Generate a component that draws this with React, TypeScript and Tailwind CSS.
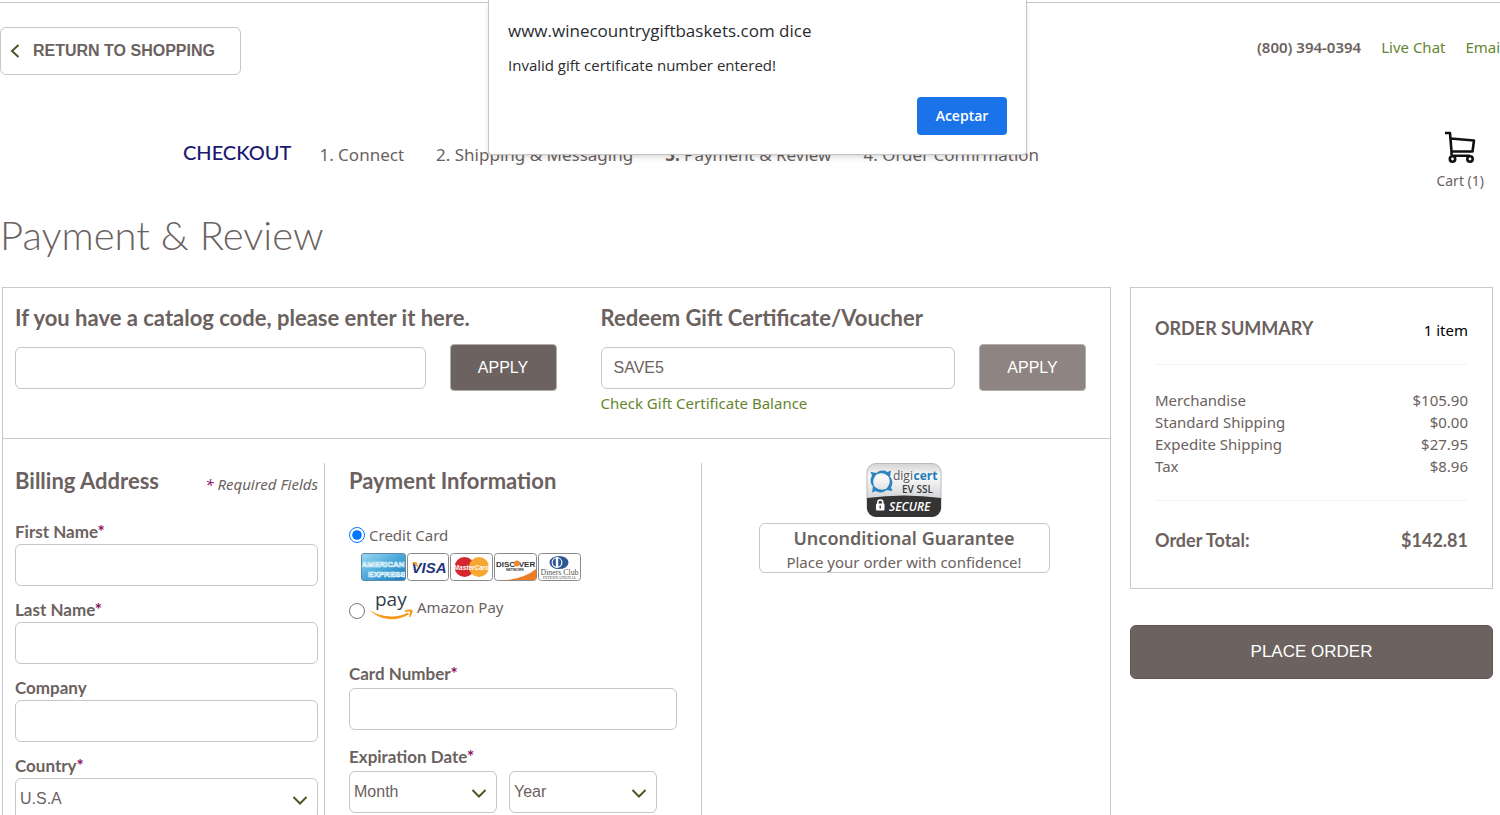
import React from "react";

const display = "font-[Lato,sans-serif]";
const field =
  "block h-[42px] w-full rounded-md border border-[#cbc5c5] bg-white font-['Liberation_Sans',sans-serif] text-base text-[#6b6260] outline-none";

function Star() {
  return <span className="text-[#8a0f64]">*</span>;
}

function FieldLabel({ id, label, required, roomy }: { id: string; label: string; required?: boolean; roomy?: boolean }) {
  return (
    <label
      htmlFor={id}
      className={`${display} block text-[17px] font-bold ${roomy ? "leading-7" : "leading-6"}`}
    >
      {label}
      {required && <Star />}
    </label>
  );
}

function TextField(props: { id: string; label: string; required?: boolean; roomy?: boolean }) {
  return (
    <div>
      <FieldLabel {...props} />
      <input id={props.id} type="text" className={`${field} px-3`} />
    </div>
  );
}

function Dropdown({ id, value, label }: { id: string; value: string; label?: string }) {
  return (
    <div className="relative">
      <select id={id} aria-label={label} className={`${field} appearance-none pr-10 pl-1`}>
        <option>{value}</option>
      </select>
      <svg
        className="pointer-events-none absolute top-4 right-2.5 h-3 w-4"
        viewBox="0 0 16 12"
        fill="none"
        stroke="#4f5527"
        strokeWidth="2"
      >
        <path d="M1.500 3 8 9.500 14.500 3" />
      </svg>
    </div>
  );
}

function CartIcon() {
  return (
    <svg className="h-8 w-8" viewBox="0 0 32 32" fill="none" stroke="#111" strokeWidth="2.600">
      <path d="M1 2h5l1.500 18.500M6.500 7.500 30 9.500 28.500 20.500H7.500M7.500 20.500v3.500M8 24.800h18" strokeLinejoin="round" />
      <circle cx="8.500" cy="28" r="2.700" />
      <circle cx="26" cy="28" r="2.700" />
    </svg>
  );
}

function CardLogos() {
  return (
    <svg className="h-7 w-[220px]" viewBox="0 0 220 28" role="img" aria-label="Accepted cards">
      <defs>
        <linearGradient id="amex" x1="0" y1="0" x2="1" y2="1">
          <stop offset="0" stopColor="#9fd8f2" />
          <stop offset="0.500" stopColor="#4aa9da" />
          <stop offset="1" stopColor="#1b7abb" />
        </linearGradient>
        <clipPath id="amexClip">
          <rect x="1" y="1" width="43" height="26" rx="2" />
        </clipPath>
      </defs>
      <g stroke="#8a8a8a" strokeWidth="1">
        <rect x="0.500" y="0.500" width="44" height="27" rx="2.500" fill="url(#amex)" stroke="#5b8ba6" />
        <rect x="46.500" y="0.500" width="41" height="27" rx="3" fill="#fff" />
        <rect x="89.500" y="0.500" width="42" height="27" rx="3" fill="#fff" />
        <rect x="133.500" y="0.500" width="42" height="27" rx="3" fill="#fff" />
        <rect x="177.500" y="0.500" width="42" height="27" rx="3" fill="#fff" />
      </g>
      <g fontFamily="Liberation Sans, sans-serif" textAnchor="middle">
        <g clipPath="url(#amexClip)" fontWeight="bold" fill="#3d9bd0" stroke="#eaf8fe" strokeWidth="0.700" fontSize="8">
          <text x="22" y="14">AMERICAN</text>
          <text x="26" y="23.500">EXPRESS</text>
        </g>
        <text x="68" y="20" fontSize="15" fontWeight="bold" fontStyle="italic" fill="#1f3580">VISA</text>
        <path d="M51 9h4.500l2 6z" fill="#e9a32a" />
        <circle cx="103.500" cy="14" r="10" fill="#d2282e" />
        <circle cx="118" cy="14" r="10" fill="#f7a833" />
        <text x="110.500" y="16.500" fontSize="6.500" fontWeight="bold" fontStyle="italic" fill="#fff">MasterCard</text>
        <path d="M175 16v9a2 2 0 0 1-2 2h-27q18-2 29-11z" fill="#ee7c22" />
        <g fill="#333" fontWeight="bold">
          <text x="144.500" y="13.500" fontSize="8">DISC</text>
          <text x="166" y="13.500" fontSize="8">VER</text>
          <text x="154" y="18" fontSize="3.500">NETWORK</text>
        </g>
        <circle cx="156" cy="10.500" r="3" fill="#ee8a2f" />
        <ellipse cx="198" cy="9.500" rx="9.500" ry="6.600" fill="#2c5795" />
        <circle cx="196" cy="9.500" r="5.400" fill="#fff" />
        <path d="M194.800 5.300a4.400 4.400 0 0 0 0 8.400zM197.200 5.300a4.400 4.400 0 0 1 0 8.400z" fill="#2c5795" />
        <g fill="#555" fontFamily="Liberation Serif, serif">
          <text x="198.500" y="22" fontSize="7.800">Diners Club</text>
          <text x="198.500" y="26" fontSize="4.200">INTERNATIONAL</text>
        </g>
      </g>
    </svg>
  );
}

function AmazonPayLogo() {
  return (
    <svg className="h-8 w-11 overflow-visible" viewBox="0 0 44 32" aria-hidden="true">
      <text x="6" y="15" fontFamily="Open Sans, sans-serif" fontSize="19" fill="#333e48">pay</text>
      <path d="M.5 19c11 7.500 28 8.500 38.500 2.500l.8 2C27 31 11 29.500.5 19z" fill="#f79a1c" />
      <path d="M35.500 19.800c3-1.500 7-1.700 8-.8.500 1.800-.6 5-2.600 7.300l-1.100-.5c.9-2 1.500-4 1.100-5-1-.5-3.200-.2-5.200.2z" fill="#f79a1c" />
    </svg>
  );
}

function SecureSeal() {
  return (
    <svg className="h-[54px] w-[76px]" viewBox="0 0 76 54" role="img" aria-label="DigiCert EV SSL secure">
      <defs>
        <linearGradient id="seal" x1="0" y1="0" x2="0" y2="1">
          <stop offset="0" stopColor="#d4d4d6" />
          <stop offset="0.250" stopColor="#fafafa" />
          <stop offset="0.700" stopColor="#cfd0d2" />
        </linearGradient>
      </defs>
      <rect x="1" y="0.500" width="74" height="53" rx="9" fill="url(#seal)" stroke="#b9b9bb" />
      <path d="M1 35q37-5 74 0v10a9 9 0 0 1-9 9H10a9 9 0 0 1-9-9z" fill="#353334" />
      <g transform="translate(15.500 18.500)" fill="#2a82c0">
        <path id="blade" d="M-7-5.500C-5-10.500 1-12.500 6-9.500L9.500-11 8.500-4.500 4.500-6.800C1-9.200-4-8.500-7-5.500z" />
        <use href="#blade" transform="rotate(90)" />
        <use href="#blade" transform="rotate(180)" />
        <use href="#blade" transform="rotate(270)" />
      </g>
      <g fontFamily="Open Sans, sans-serif">
        <text x="27" y="16.500" fontSize="12" fill="#555">digi</text>
        <text x="47.500" y="16.500" fontSize="12" fontWeight="bold" fill="#1f7ab9">cert</text>
        <text x="36" y="30" fontSize="10" fontWeight="600" fill="#3a3a3c">EV SSL</text>
        <text x="23" y="47.500" fontSize="12" fontWeight="600" fontStyle="italic" fill="#fff">SECURE</text>
      </g>
      <rect x="10" y="40.500" width="8.500" height="7" rx="1" fill="#fff" />
      <path d="M11.800 41v-1.500a2.500 2.500 0 0 1 5 0V41" fill="none" stroke="#fff" strokeWidth="1.500" />
      <path d="M14.200 42.500v3" stroke="#2f2d2e" strokeWidth="1.200" />
    </svg>
  );
}

const charges = [
  ["Merchandise", "$105.90"],
  ["Standard Shipping", "$0.00"],
  ["Expedite Shipping", "$27.95"],
  ["Tax", "$8.96"],
];

const sectionTitle = `${display} text-[22px] leading-9 font-bold`;
const applyButton =
  "h-[47px] w-[107px] shrink-0 rounded border border-[#b5aeae] font-['Liberation_Sans',sans-serif] text-base text-white";

export default function App() {
  return (
    <div className="relative h-screen overflow-hidden bg-white font-['Noto_Sans',sans-serif] text-[15px] text-[#6b6260]">
      <header className="mt-0.5 border-t border-[#c4c4c4] pt-6">
        <div className="flex items-start justify-between">
          <a
            href="#shop"
            className="flex h-12 w-[241px] items-center gap-3 rounded-md border border-[#cbc5c5] pl-2 font-['Liberation_Sans',sans-serif] text-base font-bold"
          >
            <svg className="h-4 w-3" viewBox="0 0 12 16" fill="none" stroke="#4f5527" strokeWidth="2">
              <path d="M9.500 2 3 8l6.500 6" />
            </svg>
            RETURN TO SHOPPING
          </a>
          <nav className="-mr-1 flex items-center gap-5 pt-2 leading-6 whitespace-nowrap">
            <span className="font-semibold">(800) 394-0394</span>
            <a href="#chat" className="text-[#64862f]">Live Chat</a>
            <a href="#email" className="text-[#64862f]">Email</a>
          </nav>
        </div>
        <div className="flex justify-between pt-14 pr-4 pl-[183px]">
          <div className="flex items-center gap-7 self-start">
            <span className={`${display} text-xl leading-[42px] font-medium text-[#1b1a70]`}>CHECKOUT</span>
            <ol className="flex gap-8 pt-1.5 text-[17px] leading-6 whitespace-nowrap">
              <li>1. Connect</li>
              <li>2. Shipping &amp; Messaging</li>
              <li aria-current="step"><b className="font-bold">3.</b> Payment &amp; Review</li>
              <li>4. Order Confirmation</li>
            </ol>
          </div>
          <a href="#cart" className="flex flex-col items-center text-sm leading-9">
            <CartIcon />
            Cart (1)
          </a>
        </div>
      </header>

      <h1 className="pt-1 font-[Lato,sans-serif] text-[40px] leading-[64px] font-light">Payment &amp; Review</h1>

      <main className="grid grid-cols-[1fr_363px] items-start gap-[19px] pt-5 pr-[7px] pl-0.5">
        <form className="border border-[#c9c9c9]">
          <div className="grid grid-cols-[541fr_485fr] gap-11 border-b border-[#c9c9c9] pt-3 pr-6 pb-[23px] pl-3">
            <div>
              <label htmlFor="catalog" className={`${sectionTitle} block`}>
                If you have a catalog code, please enter it here.
              </label>
              <div className="mt-2 flex items-center gap-6">
                <input id="catalog" type="text" className={`${field} px-3`} />
                <button type="button" className={`${applyButton} bg-[#6c6361]`}>APPLY</button>
              </div>
            </div>
            <div>
              <label htmlFor="voucher" className={`${sectionTitle} block`}>
                Redeem Gift Certificate/Voucher
              </label>
              <div className="mt-2 flex items-center gap-6">
                <input id="voucher" type="text" defaultValue="SAVE5" className={`${field} px-3`} />
                <button type="button" className={`${applyButton} bg-[#8e8583]`}>APPLY</button>
              </div>
              <a href="#balance" className="block leading-6 text-[#64862f]">Check Gift Certificate Balance</a>
            </div>
          </div>

          <div className="grid grid-cols-[310fr_377fr_404fr_4fr] pt-6 pl-3">
            <section className="flex flex-col gap-3 border-r border-[#c9c9c9] pr-1.5">
              <div className="mb-[9px] flex items-center justify-between">
                <h2 className={sectionTitle}>Billing Address</h2>
                <p className="pt-1.5 italic"><Star /> Required Fields</p>
              </div>
              <TextField id="first" label="First Name" required />
              <TextField id="last" label="Last Name" required />
              <TextField id="company" label="Company" />
              <div>
                <FieldLabel id="country" label="Country" required />
                <Dropdown id="country" value="U.S.A" />
              </div>
            </section>

            <section className="border-r border-[#c9c9c9] pr-6 pl-6">
              <h2 className={sectionTitle}>Payment Information</h2>
              <div className="mt-6">
                <label className="flex items-center gap-1 leading-6">
                  <input type="radio" name="method" defaultChecked className="size-4 accent-[#0075ff]" />
                  Credit Card
                </label>
                <div className="mt-1.5 pl-3">
                  <CardLogos />
                </div>
                <label className="mt-2.5 flex items-center gap-1">
                  <input type="radio" name="method" className="mt-2 size-4 accent-[#0075ff]" />
                  <AmazonPayLogo />
                  Amazon Pay
                </label>
              </div>
              <div className="mt-[37px] flex flex-col gap-[13px]">
                <TextField id="card" label="Card Number" required roomy />
                <div>
                  <FieldLabel id="month" label="Expiration Date" required roomy />
                  <div className="grid grid-cols-2 gap-3 pr-5">
                    <Dropdown id="month" value="Month" />
                    <Dropdown id="year" value="Year" label="Expiration year" />
                  </div>
                </div>
              </div>
            </section>

            <section className="flex flex-col items-center gap-1.5">
              <SecureSeal />
              <div className="w-[291px] rounded-md border border-[#cbc5c5] text-center">
                <p className="text-lg leading-7 font-semibold">Unconditional Guarantee</p>
                <p className="leading-5">Place your order with confidence!</p>
              </div>
            </section>
          </div>
        </form>

        <aside>
          <div className="border border-[#c9c9c9] px-6 pt-6 pb-8">
            <div className="flex items-center justify-between border-b border-[#f4f2f2] pb-5">
              <h2 className={`${display} text-lg leading-8 font-bold`}>ORDER SUMMARY</h2>
              <span className="pt-1 text-black">1 item</span>
            </div>
            <dl className="border-b border-[#f4f2f2] pt-6 pb-[23px]">
              {charges.map(([name, amount]) => (
                <div key={name} className="flex justify-between leading-[22px]">
                  <dt>{name}</dt>
                  <dd>{amount}</dd>
                </div>
              ))}
            </dl>
            <div className={`${display} flex justify-between pt-[23px] text-lg leading-8 font-bold`}>
              <span>Order Total:</span>
              <span>$142.81</span>
            </div>
          </div>
          <button
            type="submit"
            className="mt-9 h-[54px] w-full rounded-md border border-[#5f5654] bg-[#6c6361] font-['Liberation_Sans',sans-serif] text-[17px] text-white"
          >
            PLACE ORDER
          </button>
        </aside>
      </main>

      <div
        role="alertdialog"
        aria-labelledby="alert-title"
        aria-describedby="alert-text"
        className="absolute top-0 left-[488px] w-[539px] rounded-b-sm border border-t-0 border-[#c4c4c4] bg-white px-[19px] pt-[15px] pb-[19px] font-['Open_Sans',sans-serif] text-[#2a2c2f] shadow-md"
      >
        <p id="alert-title" className="text-[17px] leading-8">www.winecountrygiftbaskets.com dice</p>
        <p id="alert-text" className="pt-1.5 leading-6">Invalid gift certificate number entered!</p>
        <div className="flex justify-end pt-5">
          <button type="button" className="h-[38px] w-[90px] rounded bg-[#1a73e8] text-sm font-semibold text-white">
            Aceptar
          </button>
        </div>
      </div>
    </div>
  );
}
